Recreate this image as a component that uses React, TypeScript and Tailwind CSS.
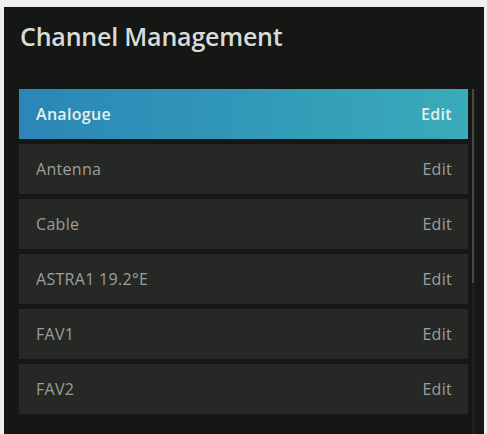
import React from "react";

const channels = ["Antenna", "Cable", "ASTRA1 19.2°E", "FAV1", "FAV2"];

export default function App() {
  return (
    <div
      className="h-[434px] w-[487px] bg-[#efefef] pt-[7px] pl-[4px] pr-[3px]"
      style={{ fontFamily: '"Open Sans", "Noto Sans", sans-serif' }}
    >
      <div className="flex h-full flex-col bg-[#151715]">
        <div className="h-[82px] pl-[16px] pt-[13px]">
          <h1 className="text-[25px] leading-[32px] font-semibold tracking-[-0.2px] text-[#d9dbd9]">
            Channel Management
          </h1>
        </div>
        <div className="flex flex-1 gap-[4px] pl-[15px]">
          <div className="flex w-[449px] flex-col gap-[5px]">
            <div className="flex h-[50px] items-center justify-between bg-linear-to-r from-[#2a86b6] to-[#3aabba] pl-[17px] pr-[16px] text-[16px] tracking-[0.3px] font-semibold text-[#e3f0ec]">
              <span>Analogue</span>
              <span>Edit</span>
            </div>
            {channels.map((name) => (
              <div
                key={name}
                className="flex h-[50px] items-center justify-between bg-[#252824] pl-[17px] pr-[16px] text-[16px] tracking-[0.3px] text-[#9c9f9b]"
              >
                <span>{name}</span>
                <span>Edit</span>
              </div>
            ))}
          </div>
          <div className="flex w-[3px] flex-col bg-[#1c1f1c]">
            <div className="h-[194px] w-[2px] bg-[#464a46]" />
          </div>
        </div>
      </div>
    </div>
  );
}
